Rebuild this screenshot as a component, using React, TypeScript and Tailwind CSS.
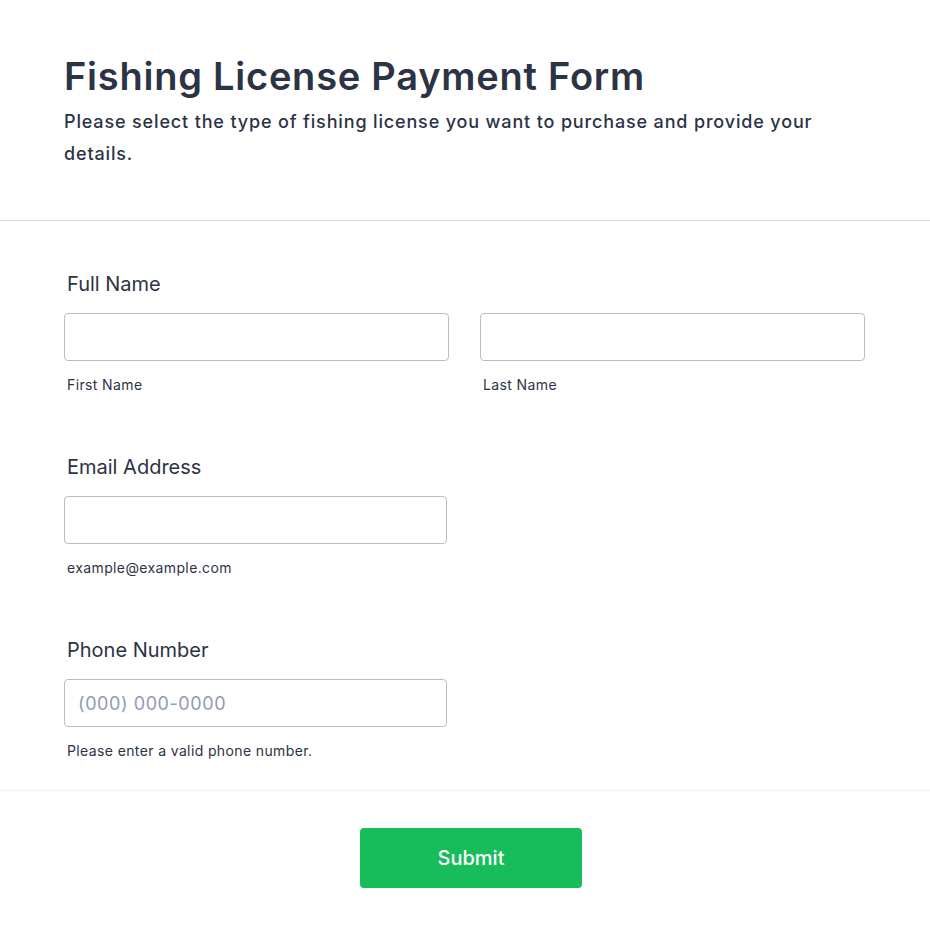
export default function App() {
  const font = { fontFamily: 'Inter, "Noto Sans", sans-serif' };
  const inputCls = "block h-[48px] rounded border border-[#b8bdc9] outline-none px-[13px] bg-white";
  return (
    <div className="min-h-[937px] w-full bg-white text-[#2c3345]" style={font}>
      <div className="px-16 pt-[52px] pb-[50px] border-b border-[#d8dae9]">
        <h1 className="text-[38px] leading-[48px] font-semibold tracking-[0.02em]">Fishing License Payment Form</h1>
        <p className="mt-[6px] text-[18px] leading-[32px] font-medium tracking-[0.047em] max-w-[800px]">
          Please select the type of fishing license you want to purchase and provide your details.
        </p>
      </div>
      <div className="pl-16 pr-[65px] pt-[49px] pb-[29px] border-b border-[#f0f0f8]">
        <div>
          <div className="pl-[3px] text-[20px] leading-[28px] font-normal mb-[15px]">Full Name</div>
          <div className="grid grid-cols-2 gap-[31px]">
            <div>
              <input className={inputCls + " w-full"} />
              <div className="pl-[3px] mt-[14px] text-[14px] leading-[20px] tracking-[0.027em]">First Name</div>
            </div>
            <div>
              <input className={inputCls + " w-full"} />
              <div className="pl-[3px] mt-[14px] text-[14px] leading-[20px] tracking-[0.027em]">Last Name</div>
            </div>
          </div>
        </div>
        <div className="mt-[58px]">
          <div className="pl-[3px] text-[20px] leading-[28px] font-normal mb-[15px]">Email Address</div>
          <input className={inputCls + " w-[383px]"} />
          <div className="pl-[3px] mt-[14px] text-[14px] leading-[20px] tracking-[0.027em]">example@example.com</div>
        </div>
        <div className="mt-[58px]">
          <div className="pl-[3px] text-[20px] leading-[28px] font-normal mb-[15px]">Phone Number</div>
          <input
            placeholder="(000) 000-0000"
            className={inputCls + " w-[383px] text-[18px] tracking-[0.032em] placeholder:text-[#8f9bb3]"}
          />
          <div className="pl-[3px] mt-[14px] text-[14px] leading-[20px] tracking-[0.027em]">Please enter a valid phone number.</div>
        </div>
      </div>
      <div className="flex justify-center pt-[37px] pl-[12px]">
        <button className="w-[222px] h-[60px] rounded bg-[#18bd5b] text-white text-[20px] font-medium">Submit</button>
      </div>
    </div>
  );
}
